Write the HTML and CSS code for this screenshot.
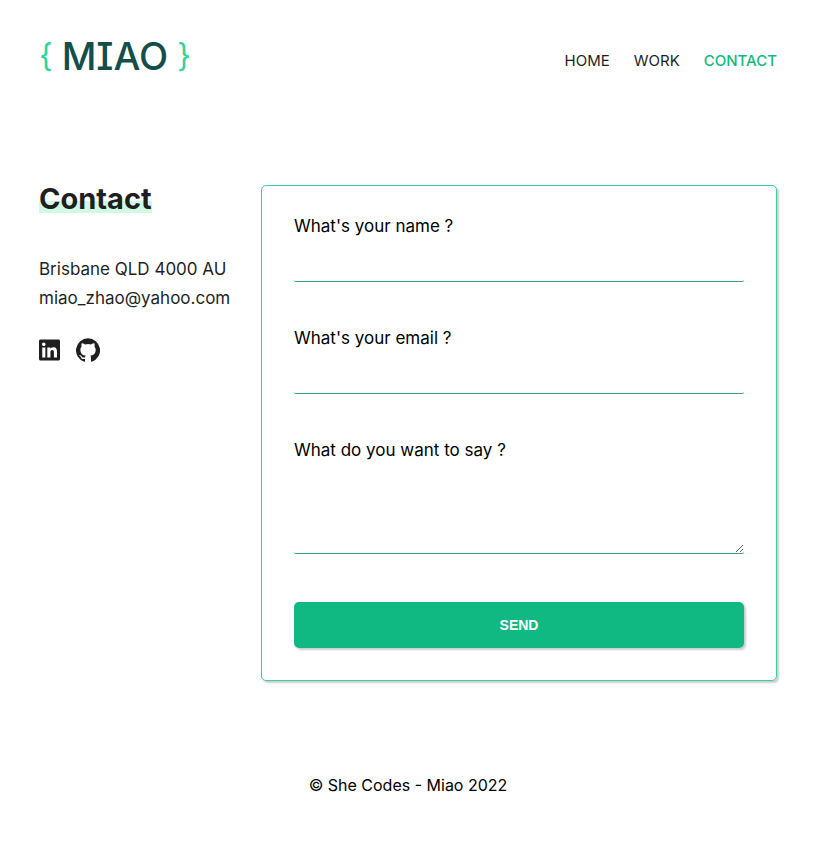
FILE: index.html
```html
<!DOCTYPE html>
<html lang="en">
<head>
  <meta charset="utf-8">
  <meta name="viewport" content="width=device-width, initial-scale=1">
  <title>Contact - Miao</title>
  <link rel="stylesheet" href="styles.css">
</head>
<body>
  <header class="header">
    <a class="logo" href="#"><span class="brace">{</span><span class="wordmark">MIAO</span><span class="brace">}</span></a>
    <nav class="nav">
      <a href="#">HOME</a>
      <a href="#">WORK</a>
      <a class="active" href="#">CONTACT</a>
    </nav>
  </header>
  <main class="main">
    <section class="info">
      <h1 class="title"><span class="mark">Contact</span></h1>
      <p class="line">Brisbane QLD 4000 AU</p>
      <p class="line"><a href="mailto:miao_zhao@yahoo.com">miao_zhao@yahoo.com</a></p>
      <div class="social">
        <a href="#" aria-label="LinkedIn"><svg width="21" height="24" viewBox="0 0 448 512"><path d="M416 32H31.9C14.3 32 0 46.5 0 64.3v383.4C0 465.5 14.3 480 31.9 480H416c17.600 0 32-14.500 32-32.300V64.300c0-17.800-14.400-32.300-32-32.300zM135.400 416H69V202.200h66.500V416zm-33.200-243c-21.300 0-38.500-17.300-38.500-38.500S80.900 96 102.200 96c21.200 0 38.500 17.300 38.500 38.500 0 21.300-17.200 38.500-38.500 38.500zm282.100 243h-66.400V312c0-24.800-.5-56.700-34.500-56.700-34.600 0-39.900 27-39.900 54.900V416h-66.400V202.200h63.700v29.200h.9c8.900-16.800 30.600-34.500 62.900-34.500 67.200 0 79.700 44.300 79.700 101.900V416z"/></svg></a>
        <a href="#" aria-label="GitHub"><svg width="24" height="24" viewBox="0 0 16 16"><path d="M8 .2a8 8 0 0 0-2.530 15.590c.4.070.55-.17.55-.38l-.01-1.490c-2.010.37-2.530-.49-2.690-.94-.09-.23-.48-.94-.82-1.130-.28-.15-.68-.52-.01-.53.63-.01 1.080.58 1.230.82.72 1.210 1.870.87 2.330.66.07-.52.28-.87.51-1.070-1.780-.2-3.640-.89-3.640-3.950 0-.87.31-1.590.82-2.150-.08-.2-.36-1.020.08-2.120 0 0 .67-.21 2.200.82a7.600 7.600 0 0 1 4 0c1.530-1.040 2.200-.82 2.200-.82.44 1.100.16 1.920.08 2.120.51.56.82 1.270.82 2.150 0 3.070-1.870 3.750-3.650 3.950.29.25.54.73.54 1.480l-.01 2.200c0 .21.15.46.55.38A8 8 0 0 0 8 .2z"/></svg></a>
      </div>
    </section>
    <form class="card">
      <label for="name">What's your name ?</label>
      <input id="name" type="text">
      <label for="email">What's your email ?</label>
      <input id="email" type="email">
      <label for="message">What do you want to say ?</label>
      <textarea id="message"></textarea>
      <button type="submit">SEND</button>
    </form>
  </main>
  <footer class="footer">© She Codes - Miao 2022</footer>
</body>
</html>
```
FILE: styles.css
```css
* {
  box-sizing: border-box;
}

body {
  margin: 0;
  padding: 32px 41px 32px 39px;
  background: #fff;
  color: #000;
  font: 17px/24px Inter, sans-serif;
}

a {
  color: inherit;
  text-decoration: none;
}

.header {
  display: flex;
  justify-content: space-between;
  align-items: center;
  height: 48px;
}

.logo {
  display: flex;
  align-items: center;
  gap: 9px;
  color: #134e4a;
  line-height: 48px;
}

.wordmark {
  font-size: 38px;
  font-weight: 500;
  font-feature-settings: "cv08";
}

.brace {
  color: #34d399;
  font-size: 32px;
}

.nav {
  display: flex;
  gap: 24px;
  padding-top: 10px;
  color: #1f1f1f;
  font-size: 15px;
}

.active {
  color: #10b981;
  font-weight: 500;
}

.main {
  display: grid;
  grid-template-columns: 191px minmax(0, 1fr);
  align-items: start;
  gap: 31px;
  margin-top: 105px;
}

.info {
  color: #1f1f1f;
}

.title {
  margin: 0 0 44px;
  font-size: 29px;
  line-height: 28px;
  font-weight: 700;
}

.mark {
  display: inline-block;
  background: linear-gradient(transparent 16px, #d1fae5 16px);
}

.line {
  margin: 0 0 5px;
}

.social {
  display: flex;
  gap: 16px;
  margin-top: 28px;
}

.social svg {
  display: block;
  fill: #1f1f1f;
}

.card {
  display: flex;
  flex-direction: column;
  padding: 28px 32px 32px;
  border: 1px solid #34d399;
  border-radius: 5px;
  box-shadow: 2px 2px 2px #ccc;
}

.card input,
.card textarea {
  width: 100%;
  height: 32px;
  margin: 12px 0 44px;
  padding: 0;
  border: 0;
  border-bottom: 1px solid #34a07f;
  border-radius: 2px;
  outline: 0;
  background: transparent;
  font: inherit;
}

.card textarea {
  height: 80px;
  margin-bottom: 48px;
  resize: vertical;
}

.card button {
  height: 46px;
  border: 0;
  border-radius: 5px;
  background: #10b981;
  box-shadow: 2px 2px 2px #ccc;
  color: #fff;
  font: 700 14px "Liberation Sans", sans-serif;
}

.footer {
  margin-top: 92px;
  font-size: 16px;
  text-align: center;
}
```
